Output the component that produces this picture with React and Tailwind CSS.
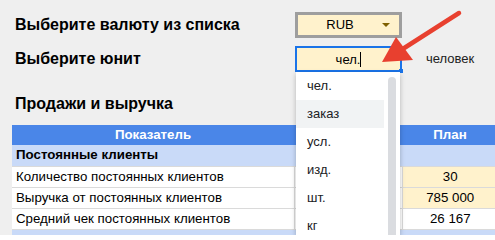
import React from "react";

const units = ["чел.", "заказ", "усл.", "изд.", "шт.", "кг"];

const rows = [
  { label: "Количество постоянных клиентов", plan: "30", input: true },
  { label: "Выручка от постоянных клиентов", plan: "785 000", input: true },
  { label: "Средний чек постоянных клиентов", plan: "26 167", input: false },
];

const UnitDropdown = () => (
  <div className="absolute left-[296px] top-[72px] bottom-0 w-[104px] bg-white shadow-[0_2px_5px_rgba(0,0,0,0.25)]">
    <ul className="w-[88px]">
      {units.map((u, i) => (
        <li
          key={u}
          className={`h-[28px] flex items-center pl-[11px] text-[13px] text-[#202124] ${i === 1 ? "bg-[#f1f3f4]" : ""}`}
        >
          {u}
        </li>
      ))}
    </ul>
    {/* scrollbar thumb */}
    <div className="absolute left-[92px] top-[5px] -bottom-4 w-[8px] rounded-full bg-[#dadce0]" />
  </div>
);

const Arrow = () => (
  <svg className="absolute inset-0 pointer-events-none" width="495" height="235">
    <line x1="459" y1="13" x2="398" y2="52" stroke="#e8402f" strokeWidth="4.5" strokeLinecap="round" />
    <polygon points="382,62 396,37 413,60" fill="#e8402f" />
  </svg>
);

export default function App() {
  return (
    <div className="relative w-[495px] h-[235px] overflow-hidden bg-[#efefef] font-['Liberation_Sans',Arial,sans-serif] text-black">
      <div className="pt-3 pl-[15px]">
        {/* currency */}
        <div className="flex items-center h-[26px]">
          <div className="w-[280px] text-[16px] font-bold">Выберите валюту из списка</div>
          <div className="relative w-[107px] h-[26px] border-[3px] border-[#9e9e9e] bg-[#fff2cc] flex items-center">
            <span className="w-[88px] text-center text-[13px]">RUB</span>
            <span className="ml-auto mr-[9px] w-0 h-0 border-l-[4px] border-r-[4px] border-t-[4px] border-l-transparent border-r-transparent border-t-[#7f6000]" />
          </div>
        </div>

        {/* unit */}
        <div className="flex items-center h-[26px] mt-[8px]">
          <div className="w-[280px] text-[16px] font-bold">Выберите юнит</div>
          <div className="relative w-[107px] h-[26px] border-2 border-[#1a73e8] bg-[#fff2cc] flex items-center justify-center">
            <span className="text-[13px] leading-none">чел.</span>
            <span className="w-px h-[15px] bg-black" />
            <span className="absolute -right-[3px] -bottom-[3px] w-[4px] h-[4px] bg-[#1a73e8]" />
          </div>
          <div className="ml-6 text-[13px] text-[#222]">человек</div>
        </div>

        <div className="mt-[22px] h-[20px] flex items-center text-[16px] font-bold">Продажи и выручка</div>
      </div>

      {/* table */}
      <table className="ml-3 mt-[11px] border-collapse text-[13.3px] table-fixed w-[486px]">
        <colgroup>
          <col className="w-[282px]" />
          <col className="w-[108px]" />
          <col className="w-[96px]" />
        </colgroup>
        <thead>
          <tr className="h-[20px] bg-[#4a86e8] text-white font-bold">
            <th className="p-0 font-bold text-center">Показатель</th>
            <th className="p-0" />
            <th className="p-0 font-bold text-center">План</th>
          </tr>
        </thead>
        <tbody>
          <tr className="h-[21px] bg-[#c9daf8]">
            <td className="pl-1 font-bold" colSpan={3}>Постоянные клиенты</td>
          </tr>
          {rows.map((r) => (
            <tr key={r.label} className="h-[21px] bg-white border-t border-[#dadada]">
              <td className="pl-1 border-r border-[#dadada]">{r.label}</td>
              <td className="border-r border-[#dadada]" />
              <td className={`text-center ${r.input ? "bg-[#fff2cc]" : ""}`}>{r.plan}</td>
            </tr>
          ))}
          <tr className="h-[21px] bg-[#c9daf8] border-t border-[#dadada]">
            <td colSpan={3} />
          </tr>
        </tbody>
      </table>

      <UnitDropdown />
      <Arrow />
    </div>
  );
}
